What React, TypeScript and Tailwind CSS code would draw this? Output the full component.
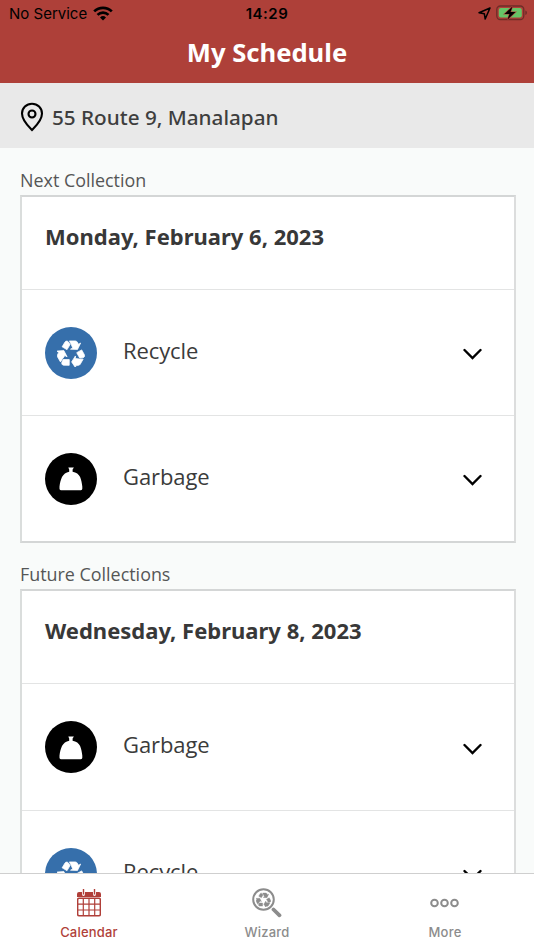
import React from 'react';

type Kind = 'Recycle' | 'Garbage';

const BagIcon = () => (
  <svg viewBox="0 0 24 24" className="w-6 h-6 mt-px" fill="white">
    <path d="M9.300.6h5.600l-1.300 1.800v2.300c3.600.6 6.300 2.500 7.500 5.300 1.200 3 1.800 6 2.200 9.500v2.300q0 1.400-1.400 1.400H1.900Q.5 23.200.5 21.800v-2.300c.4-3.500 1.200-6.700 2.500-9.500 1.400-2.800 4-4.700 7.200-5.300V2.400z" />
  </svg>
);

// One bent arrow, turned three times around the centre
const RecycleIcon = (props: React.SVGProps<SVGSVGElement>) => (
  <svg viewBox="-14 -15 28 28" fill="currentColor" stroke="currentColor" strokeWidth=".7" strokeLinejoin="round" {...props}>
    {[0, 120, 240].map((angle) => (
      <g key={angle} transform={`rotate(${angle})`}>
        <path d="M-8.900-7.200L-6-12q.6-.9 1.600-.9 1.200 0 1.900 1l1.600 2.400-3.100 5.200z" />
        <path d="M-1.600-13.100H4.300q1.200 0 1.900 1.100l1.300 2.200 2.200-1.200-3.200 6.500-7-.3 2.200-1.300L.2-9.600z" />
      </g>
    ))}
  </svg>
);

const PickupRow = ({ kind }: { kind: Kind }) => (
  <div className="h-[126.3px] shrink-0 border-t border-[#e3e4e4] pt-[0.7px] pl-[23px] pr-[32px] flex items-center">
    <div
      className={`w-[52px] h-[52px] shrink-0 rounded-full flex items-center justify-center ${
        kind === 'Recycle' ? 'bg-[#366fab]' : 'bg-black'
      }`}
    >
      {kind === 'Recycle' ? <RecycleIcon className="w-7 h-7 text-white" /> : <BagIcon />}
    </div>
    <span className="ml-[26px] mb-1.5 flex-1 text-[22px] leading-8 tracking-[-0.1px] text-[#3b3b3b]">{kind}</span>
    <svg width="20" height="12" viewBox="0 0 20 12" className="mt-[3px]" fill="none" stroke="black" strokeWidth="2.4" strokeLinecap="round">
      <path d="M2.500 2l8 8 8-8" />
    </svg>
  </div>
);

const Collection = ({ label, date, items }: { label: string; date: string; items: Kind[] }) => (
  <section className="px-5">
    <h2 className="h-[46px] pt-[19px] text-[17.9px] leading-6 text-[#555656]">{label}</h2>
    <div className="w-[496px] border-2 border-[#d4d6d6] border-l-[#dadddc] border-r-[#dcdddd] bg-white">
      <div className="h-[92px] pl-[23px] pt-[23px] font-['Noto_Sans',sans-serif] text-[22px] leading-8 font-bold text-[#383838]">{date}</div>
      {items.map((kind) => (
        <PickupRow key={kind} kind={kind} />
      ))}
    </div>
  </section>
);

const CalendarIcon = () => (
  <svg width="24" height="28" viewBox="0 0 24 28" fill="none" stroke="#b03f39">
    <path d="M0 8V5q0-2 2-2h3v2q0 2 1.500 2T8 5V3h8v2q0 2 1.500 2T19 5V3h3q2 0 2 2v3z" fill="#b03f39" stroke="none" />
    <path d="M6.500 0v5.500M17.500 0v5.500" strokeWidth="1.400" />
    <rect x=".65" y="9.200" width="22.700" height="17.600" rx="1.500" strokeWidth="1.500" />
    <path d="M6.300 9v18M12 9v18M17.700 9v18M1 15.200h22M1 21h22" strokeWidth="1.200" />
  </svg>
);

const WizardIcon = () => (
  <svg width="30" height="30" viewBox="0 0 30 30" fill="none" stroke="#8c8c8c">
    <circle cx="11.500" cy="11.500" r="10.300" strokeWidth="2" />
    <RecycleIcon x="4" y="4" width="15" height="15" color="#8c8c8c" />
    <path d="M21.500 21.500l6 5.800" strokeWidth="3.800" strokeLinecap="round" />
  </svg>
);

const MoreIcon = () => (
  <svg width="30" height="10" viewBox="0 0 30 10" fill="none" stroke="#8c8c8c" strokeWidth="2">
    <circle cx="4.500" cy="5" r="3.300" />
    <circle cx="14.500" cy="5" r="3.300" />
    <circle cx="24.500" cy="5" r="3.300" />
  </svg>
);

const tabs = [
  { name: 'Calendar', icon: <CalendarIcon />, active: true },
  { name: 'Wizard', icon: <WizardIcon /> },
  { name: 'More', icon: <MoreIcon /> },
];

const App = () => {
  return (
    <div className="w-[534px] h-[950px] overflow-hidden flex flex-col bg-[#f9fbfa] font-['Open_Sans',sans-serif]">
      {/* Status bar + title */}
      <header className="h-[83px] shrink-0 bg-[#ae4039]">
        <div className="h-7 px-[9px] grid grid-cols-3 items-center font-['Inter',sans-serif] text-black">
          <div className="flex items-center">
            <span className="text-[15px]">No Service</span>
            <svg width="20" height="15" viewBox="0 0 20 15" className="ml-[6px] -mt-[2px]" fill="none" stroke="black" strokeWidth="2.700">
              <path d="M1.200 5.400a12.600 12.600 0 0 1 17.600 0" />
              <path d="M4.500 8.900a7.900 7.900 0 0 1 11 0" />
              <path d="M10 14.500l-3-3a4.300 4.300 0 0 1 6 0z" fill="black" stroke="none" />
            </svg>
          </div>
          <span className="text-center text-[15px] font-semibold tracking-[0.5px]">14:29</span>
          <div className="flex items-center justify-end">
            <svg width="13" height="13" viewBox="0 0 13 13" className="-mt-px" fill="none" stroke="black" strokeWidth="1.500" strokeLinejoin="round">
              <path d="M12 1L1 5.800l5.300.9.900 5.300z" />
            </svg>
            <svg width="32" height="16" viewBox="0 0 32 16" className="ml-[5px] -mr-[3px] -mt-[2px]">
              <rect x=".8" y="1" width="27" height="13.500" rx="3.500" fill="none" stroke="#6f2c28" strokeWidth="1.300" />
              <rect x="2.800" y="3" width="23" height="9.500" rx="2" fill="#65c466" />
              <path d="M29.300 5.500v4.500q1.700-.6 1.700-2.250t-1.700-2.250z" fill="#6f2c28" />
              <path d="M16.500 1.500L8.500 9h5l-2 5.500 8-7.500h-5z" fill="black" stroke="#ae4039" strokeWidth="1.200" paintOrder="stroke" />
            </svg>
          </div>
        </div>
        <h1 className="h-[50px] text-center font-['Noto_Sans',sans-serif] text-[25.600px] leading-[50px] font-bold text-white">My Schedule</h1>
      </header>

      {/* Address */}
      <div className="h-[65px] shrink-0 pl-5 flex items-center bg-[#e9e9e9]">
        <svg width="24" height="30" viewBox="0 0 24 30" className="mt-[3px]" fill="none" stroke="black" strokeWidth="2.100">
          <path d="M12 28C8 24 2 18.500 2 11.500a10 9.800 0 0 1 20 0C22 18.500 16 24 12 28z" />
          <circle cx="12" cy="12" r="3.500" />
        </svg>
        <span className="ml-2 mt-1 font-['Noto_Sans',sans-serif] text-[20.700px] font-medium text-[#3e3e3e]">55 Route 9, Manalapan</span>
      </div>

      {/* Collections */}
      <main className="flex-1 min-h-0 overflow-hidden pt-[0.7px]">
        <Collection label="Next Collection" date="Monday, February 6, 2023" items={['Recycle', 'Garbage']} />
        <Collection label="Future Collections" date="Wednesday, February 8, 2023" items={['Garbage', 'Recycle']} />
      </main>

      {/* Tab bar */}
      <nav className="h-[77px] shrink-0 border-t border-[#cfcfcf] bg-white grid grid-cols-3 font-['Inter',sans-serif]">
        {tabs.map((tab) => (
          <div key={tab.name} className={`flex flex-col items-center ${tab.active ? 'text-[#b03f39]' : 'text-[#8c8c8c]'}`}>
            <div className="h-[58px] w-full -mb-[8px] flex items-center justify-center">{tab.icon}</div>
            <span className="text-[13px] leading-4 font-medium tracking-[0.2px]">{tab.name}</span>
          </div>
        ))}
      </nav>
    </div>
  );
};

export default App;
